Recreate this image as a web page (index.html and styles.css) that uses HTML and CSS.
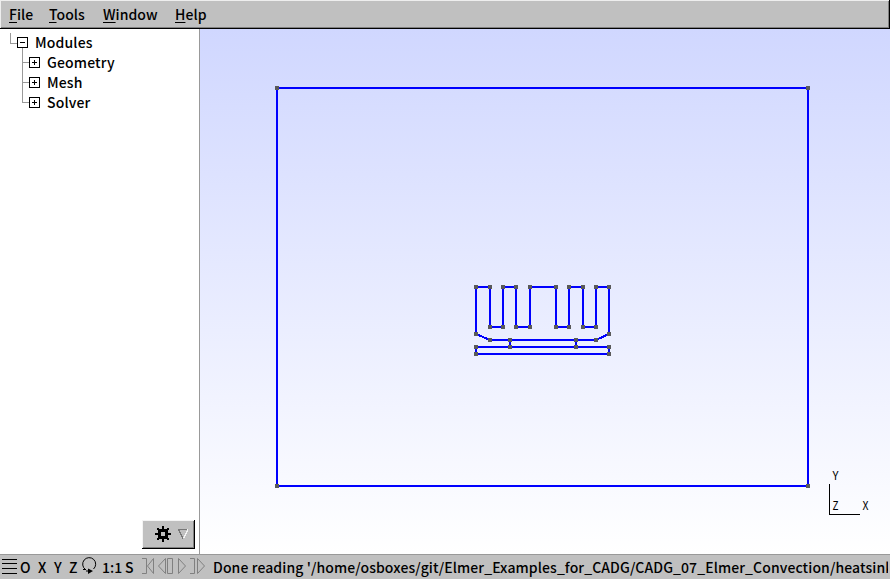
FILE: index.html
```html
<!DOCTYPE html>
<html lang="en">
<head>
<meta charset="utf-8">
<title>Gmsh</title>
<link rel="stylesheet" href="styles.css">
</head>
<body>
<div class="app">
  <nav class="menubar">
    <span class="m-file"><u>F</u>ile</span><span class="m-tools"><u>T</u>ools</span><span class="m-window"><u>W</u>indow</span><span class="m-help"><u>H</u>elp</span>
  </nav>
  <main class="workspace">
    <aside class="sidebar">
      <ul class="tree">
        <li class="root"><svg class="branch" width="34" height="20" shape-rendering="crispEdges"><path class="guide" d="M10.500 4v10.500H17M22.500 19v1"/><path class="box" d="M17.500 8.500h10v10h-10zM20 13.500h5"/></svg>Modules</li>
        <li><svg class="branch" width="46" height="20" shape-rendering="crispEdges"><path class="guide" d="M22.500 -1v21M22.500 13.500H29"/><path class="box" d="M29.500 8.500h10v10h-10zM32 13.500h5M34.500 11v5"/></svg>Geometry</li>
        <li><svg class="branch" width="46" height="20" shape-rendering="crispEdges"><path class="guide" d="M22.500 0v20M22.500 13.500H29"/><path class="box" d="M29.500 8.500h10v10h-10zM32 13.500h5M34.500 11v5"/></svg>Mesh</li>
        <li><svg class="branch" width="46" height="20" shape-rendering="crispEdges"><path class="guide" d="M22.500 0v13.500H29"/><path class="box" d="M29.500 8.500h10v10h-10zM32 13.500h5M34.500 11v5"/></svg>Solver</li>
      </ul>
      <button class="gear" aria-label="Options">
        <svg width="53" height="29" shape-rendering="crispEdges">
          <path d="M20 6h2v4h-2zM20 18h2v4h-2zM13 13h4v2h-4zM25 13h4v2h-4zM15 8h2v1h1v2h-2v-1h-1zM27 8h-2v1h-1v2h2v-1h1zM15 20h2v-1h1v-2h-2v1h-1zM27 20h-2v-1h-1v-2h2v1h1z"/>
          <path class="ring" d="M17.500 10.500h7v7h-7z"/>
          <path class="dark" d="M46 9.500h-9.500l4.500 9"/><path class="light" d="M46 9.500l-4.500 9"/>
        </svg>
      </button>
    </aside>
    <section class="view">
      <svg viewBox="200 29 690 525" width="690" height="525">
        <g class="geo" shape-rendering="crispEdges">
          <path d="M277 88H808V486H277z"/>
          <path d="M490 340L476 334V287H490V327H503V287H516V327H530V287H556V327H569V287H583V327H596V287H609V334L596 340z"/>
          <path d="M476 347H609V354H476zM510 340V347M576 340V347"/>
        </g>
        <path class="points" shape-rendering="crispEdges" d="M277 88h0M808 88h0M808 486h0M277 486h0M476 287h0M490 287h0M503 287h0M516 287h0M530 287h0M556 287h0M569 287h0M583 287h0M596 287h0M609 287h0M490 327h0M503 327h0M516 327h0M530 327h0M556 327h0M569 327h0M583 327h0M596 327h0M476 334h0M609 334h0M490 340h0M510 340h0M576 340h0M596 340h0M476 347h0M510 347h0M576 347h0M609 347h0M476 354h0M609 354h0"/>
        <path class="axes" shape-rendering="crispEdges" d="M829.500 484V514.500H860"/>
        <g class="axis-label"><text x="832.500" y="480" textLength="6" lengthAdjust="spacingAndGlyphs">Y</text><text x="832.500" y="510" textLength="6" lengthAdjust="spacingAndGlyphs">Z</text><text x="862.500" y="510" textLength="6" lengthAdjust="spacingAndGlyphs">X</text></g>
      </svg>
    </section>
  </main>
  <footer class="status">
    <svg class="tools" width="206" height="24">
      <path class="ink" shape-rendering="crispEdges" d="M2 4.500h15M2 8.500h15M2 13.500h15M2 18.500h15"/>
      <text x="20" y="18">O</text><text x="38" y="18">X</text><text x="54" y="18">Y</text><text x="69" y="18">Z</text>
      <path class="ink" d="M85.500 14.500A6.500 6.500 0 1 1 93.500 14M83 14.500h3M86 16h2"/><path d="M88 13.500l5 2.500-5 3z"/>
      <text x="102" y="18">1:1</text><text x="125" y="18">S</text>
      <path class="media" d="M142 3.500h4.500v15H142M153.500 3.500v15l-6-7.500zM165.500 3.500v15l-7-7.500zM167.500 3.500h5v15h-5zM178.500 3.500v15l7-7.500zM190 3.500h4.500v15H190M197.500 3.500v15l7-7.500z"/>
    </svg>
    <span class="message">Done reading '/home/osboxes/git/Elmer_Examples_for_CADG/CADG_07_Elmer_Convection/heatsink</span>
  </footer>
</div>
</body>
</html>
```
FILE: styles.css
```css
* { box-sizing: border-box; }
body { margin: 0; overflow: hidden; font: 500 14px/20px "Noto Sans CJK SC", sans-serif; color: #000; }
.app { display: flex; flex-direction: column; width: 890px; height: 579px; }
.menubar { display: flex; height: 29px; padding: 4px 9px 0; letter-spacing: 0.05px; background: #c0c0c0; border-bottom: 1px solid #000; border-right: 1px solid #000; box-shadow: inset 1px 1px #eee, inset -1px -1px #808080; }
.menubar u { text-underline-offset: 2px; }
.m-file { width: 40px; }
.m-tools { width: 54px; }
.m-window { width: 72px; }
.workspace { display: flex; height: 525px; }
.sidebar { display: flex; flex-direction: column; justify-content: space-between; width: 200px; border-right: 1px solid #999; background: #fff; padding-bottom: 5px; }
.tree { list-style: none; margin: 0; padding: 0; letter-spacing: 0.15px; }
.tree li { display: flex; height: 20px; padding-top: 3px; white-space: pre; }
.branch { flex: none; margin-top: -3px; margin-right: 1px; overflow: visible; }
.guide { fill: none; stroke: #999; }
.box { fill: none; stroke: #000; }
.gear { align-self: flex-end; margin-right: 4px; width: 53px; height: 29px; padding: 0; border: 0; background: #c0c0c0; box-shadow: inset -1px -1px #000, inset 1px 1px #f4f4f4, inset -2px -2px #808080; }
.gear svg { display: block; }
.ring { fill: none; stroke: #000; stroke-width: 3; }
.dark { fill: none; stroke: #777; }
.light { fill: none; stroke: #f4f4f4; }
.view { width: 690px; background: linear-gradient(#d0d7ff, #fff); }
.view svg { display: block; }
.geo { fill: none; stroke: #00f; stroke-width: 2; }
.points { stroke: #595959; stroke-width: 4; stroke-linecap: square; }
.axes { fill: none; stroke: #000; }
.axis-label { font: 12px "Noto Sans CJK SC", sans-serif; }
.status { display: flex; height: 25px; border-top: 1px solid #999; background: #c0c0c0; overflow: hidden; }
.tools { flex: none; }
.ink { fill: none; stroke: #000; }
.media { fill: none; stroke: #808080; }
.message { margin-left: 7px; padding-top: 2px; width: 675px; letter-spacing: 0.1px; white-space: nowrap; overflow: hidden; }
```
